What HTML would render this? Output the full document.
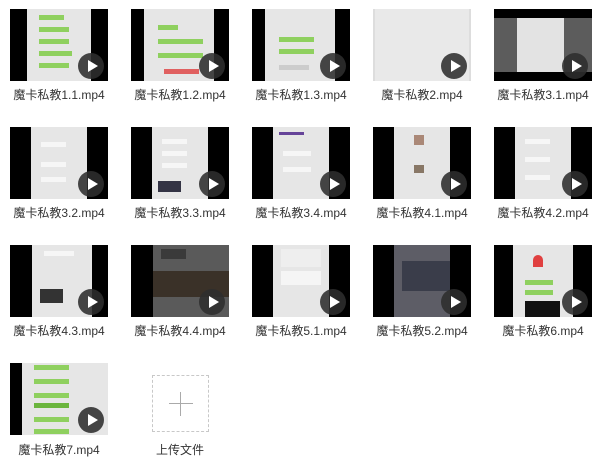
<!DOCTYPE html>
<html><head><meta charset="utf-8"><style>
body{margin:0;width:600px;height:459px;background:#fff;position:relative;overflow:hidden;font-family:"Liberation Sans","Noto Sans CJK SC",sans-serif}
.t{position:absolute;width:98px;height:72px;background:#000;overflow:hidden}
.s{position:absolute;top:0;height:72px;background:#e6e6e6}
.g{position:absolute;height:5px;background:#8fd05f}
.w{position:absolute;height:5px;background:#f6f6f6}
.p{position:absolute;left:68px;top:44px;width:26px;height:26px;border-radius:50%;background:rgba(45,45,45,.88)}
.p:after{content:"";position:absolute;left:10px;top:7px;border-left:10px solid #fff;border-top:6px solid transparent;border-bottom:6px solid transparent}
.l{position:absolute;width:120px;text-align:center;font-size:12px;color:#333;line-height:14px}
.up{position:absolute;left:152px;top:375px;width:55px;height:55px;border:1px dashed #c8c8c8}
.up:before{content:"";position:absolute;left:16px;top:27px;width:24px;height:1px;background:#aaa}
.up:after{content:"";position:absolute;left:27px;top:16px;width:1px;height:24px;background:#aaa}
</style></head><body>

<div class="t" style="left:10px;top:9px"><div class="s" style="left:17px;width:64px"><div class="g" style="left:12px;top:6px;width:25px"></div><div class="g" style="left:12px;top:18px;width:30px"></div><div class="g" style="left:12px;top:30px;width:30px"></div><div class="g" style="left:12px;top:42px;width:33px"></div><div class="g" style="left:12px;top:54px;width:30px"></div></div><div class="p"></div></div>
<div class="l" style="left:-1px;top:88px">魔卡私教1.1.mp4</div>

<div class="t" style="left:131px;top:9px"><div class="s" style="left:13px;width:70px"><div class="g" style="left:14px;top:16px;width:20px"></div><div class="g" style="left:14px;top:30px;width:45px"></div><div class="g" style="left:14px;top:44px;width:45px"></div><div style="position:absolute;left:20px;top:60px;width:35px;height:5px;background:#e06060"></div></div><div class="p"></div></div>
<div class="l" style="left:120px;top:88px">魔卡私教1.2.mp4</div>

<div class="t" style="left:252px;top:9px"><div class="s" style="left:13px;width:70px"><div class="g" style="left:14px;top:28px;width:35px"></div><div class="g" style="left:14px;top:40px;width:35px"></div><div class="w" style="left:14px;top:56px;width:30px;background:#ccc"></div></div><div class="p"></div></div>
<div class="l" style="left:241px;top:88px">魔卡私教1.3.mp4</div>

<div class="t" style="left:373px;top:9px;background:#ddd"><div class="s" style="left:2px;width:94px;background:#e9e9e9"></div><div class="p"></div></div>
<div class="l" style="left:362px;top:88px">魔卡私教2.mp4</div>

<div class="t" style="left:494px;top:9px"><div class="s" style="left:0;top:9px;height:54px;width:98px;background:#5c5c5c"><div style="position:absolute;left:23px;top:0;width:47px;height:54px;background:#e3e3e3"></div></div><div class="p"></div></div>
<div class="l" style="left:483px;top:88px">魔卡私教3.1.mp4</div>

<div class="t" style="left:10px;top:127px"><div class="s" style="left:21px;width:56px"><div class="w" style="left:10px;top:15px;width:25px"></div><div class="w" style="left:10px;top:35px;width:25px"></div><div class="w" style="left:10px;top:50px;width:25px"></div></div><div class="p"></div></div>
<div class="l" style="left:-1px;top:206px">魔卡私教3.2.mp4</div>

<div class="t" style="left:131px;top:127px"><div class="s" style="left:21px;width:56px"><div class="w" style="left:10px;top:12px;width:25px"></div><div class="w" style="left:10px;top:24px;width:25px"></div><div class="w" style="left:10px;top:36px;width:25px"></div><div style="position:absolute;left:6px;top:54px;width:23px;height:11px;background:#334"></div></div><div class="p"></div></div>
<div class="l" style="left:120px;top:206px">魔卡私教3.3.mp4</div>

<div class="t" style="left:252px;top:127px"><div class="s" style="left:21px;width:56px"><div style="position:absolute;left:6px;top:5px;width:25px;height:3px;background:#649"></div><div class="w" style="left:10px;top:24px;width:28px"></div><div class="w" style="left:10px;top:40px;width:28px"></div></div><div class="p"></div></div>
<div class="l" style="left:241px;top:206px">魔卡私教3.4.mp4</div>

<div class="t" style="left:373px;top:127px"><div class="s" style="left:21px;width:56px"><div style="position:absolute;left:20px;top:8px;width:10px;height:10px;background:#a87"></div><div style="position:absolute;left:20px;top:38px;width:10px;height:8px;background:#876"></div></div><div class="p"></div></div>
<div class="l" style="left:362px;top:206px">魔卡私教4.1.mp4</div>

<div class="t" style="left:494px;top:127px"><div class="s" style="left:21px;width:56px"><div class="w" style="left:10px;top:12px;width:25px"></div><div class="w" style="left:10px;top:30px;width:25px"></div><div class="w" style="left:10px;top:48px;width:25px"></div></div><div class="p"></div></div>
<div class="l" style="left:483px;top:206px">魔卡私教4.2.mp4</div>

<div class="t" style="left:10px;top:245px"><div class="s" style="left:22px;width:60px"><div class="w" style="left:12px;top:6px;width:30px"></div><div style="position:absolute;left:8px;top:44px;width:23px;height:14px;background:#333"></div></div><div class="p"></div></div>
<div class="l" style="left:-1px;top:324px">魔卡私教4.3.mp4</div>

<div class="t" style="left:131px;top:245px"><div class="s" style="left:22px;width:77px;background:#5a5a5a"><div style="position:absolute;left:0;top:26px;width:77px;height:26px;background:#3a3128"></div><div style="position:absolute;left:8px;top:4px;width:25px;height:10px;background:#3a3a3a"></div></div><div class="p"></div></div>
<div class="l" style="left:120px;top:324px">魔卡私教4.4.mp4</div>

<div class="t" style="left:252px;top:245px"><div class="s" style="left:21px;width:56px"><div class="w" style="left:8px;top:4px;width:40px;height:18px;background:#eee"></div><div class="w" style="left:8px;top:26px;width:40px;height:14px;background:#f5f5f5"></div></div><div class="p"></div></div>
<div class="l" style="left:241px;top:324px">魔卡私教5.1.mp4</div>

<div class="t" style="left:373px;top:245px"><div class="s" style="left:21px;width:56px;background:#5d5d66"><div style="position:absolute;left:8px;top:16px;width:48px;height:30px;background:#3a3d4a"></div></div><div class="p"></div></div>
<div class="l" style="left:362px;top:324px">魔卡私教5.2.mp4</div>

<div class="t" style="left:494px;top:245px"><div class="s" style="left:19px;width:60px"><div style="position:absolute;left:20px;top:10px;width:10px;height:12px;background:#e04040;border-radius:5px 5px 0 0"></div><div class="g" style="left:12px;top:35px;width:28px"></div><div class="g" style="left:12px;top:45px;width:28px"></div><div style="position:absolute;left:12px;top:56px;width:35px;height:16px;background:#111"></div></div><div class="p"></div></div>
<div class="l" style="left:483px;top:324px">魔卡私教6.mp4</div>

<div class="t" style="left:10px;top:363px"><div class="s" style="left:12px;width:86px"><div class="g" style="left:12px;top:2px;width:35px"></div><div class="g" style="left:12px;top:16px;width:35px"></div><div class="g" style="left:12px;top:30px;width:35px"></div><div class="g" style="left:12px;top:40px;width:35px;background:#6bb53e"></div><div class="g" style="left:12px;top:54px;width:35px"></div><div class="g" style="left:12px;top:66px;width:35px"></div></div><div class="p"></div></div>
<div class="l" style="left:-1px;top:443px">魔卡私教7.mp4</div>

<div class="up"></div>
<div class="l" style="left:120px;top:443px">上传文件</div>
</body></html>
